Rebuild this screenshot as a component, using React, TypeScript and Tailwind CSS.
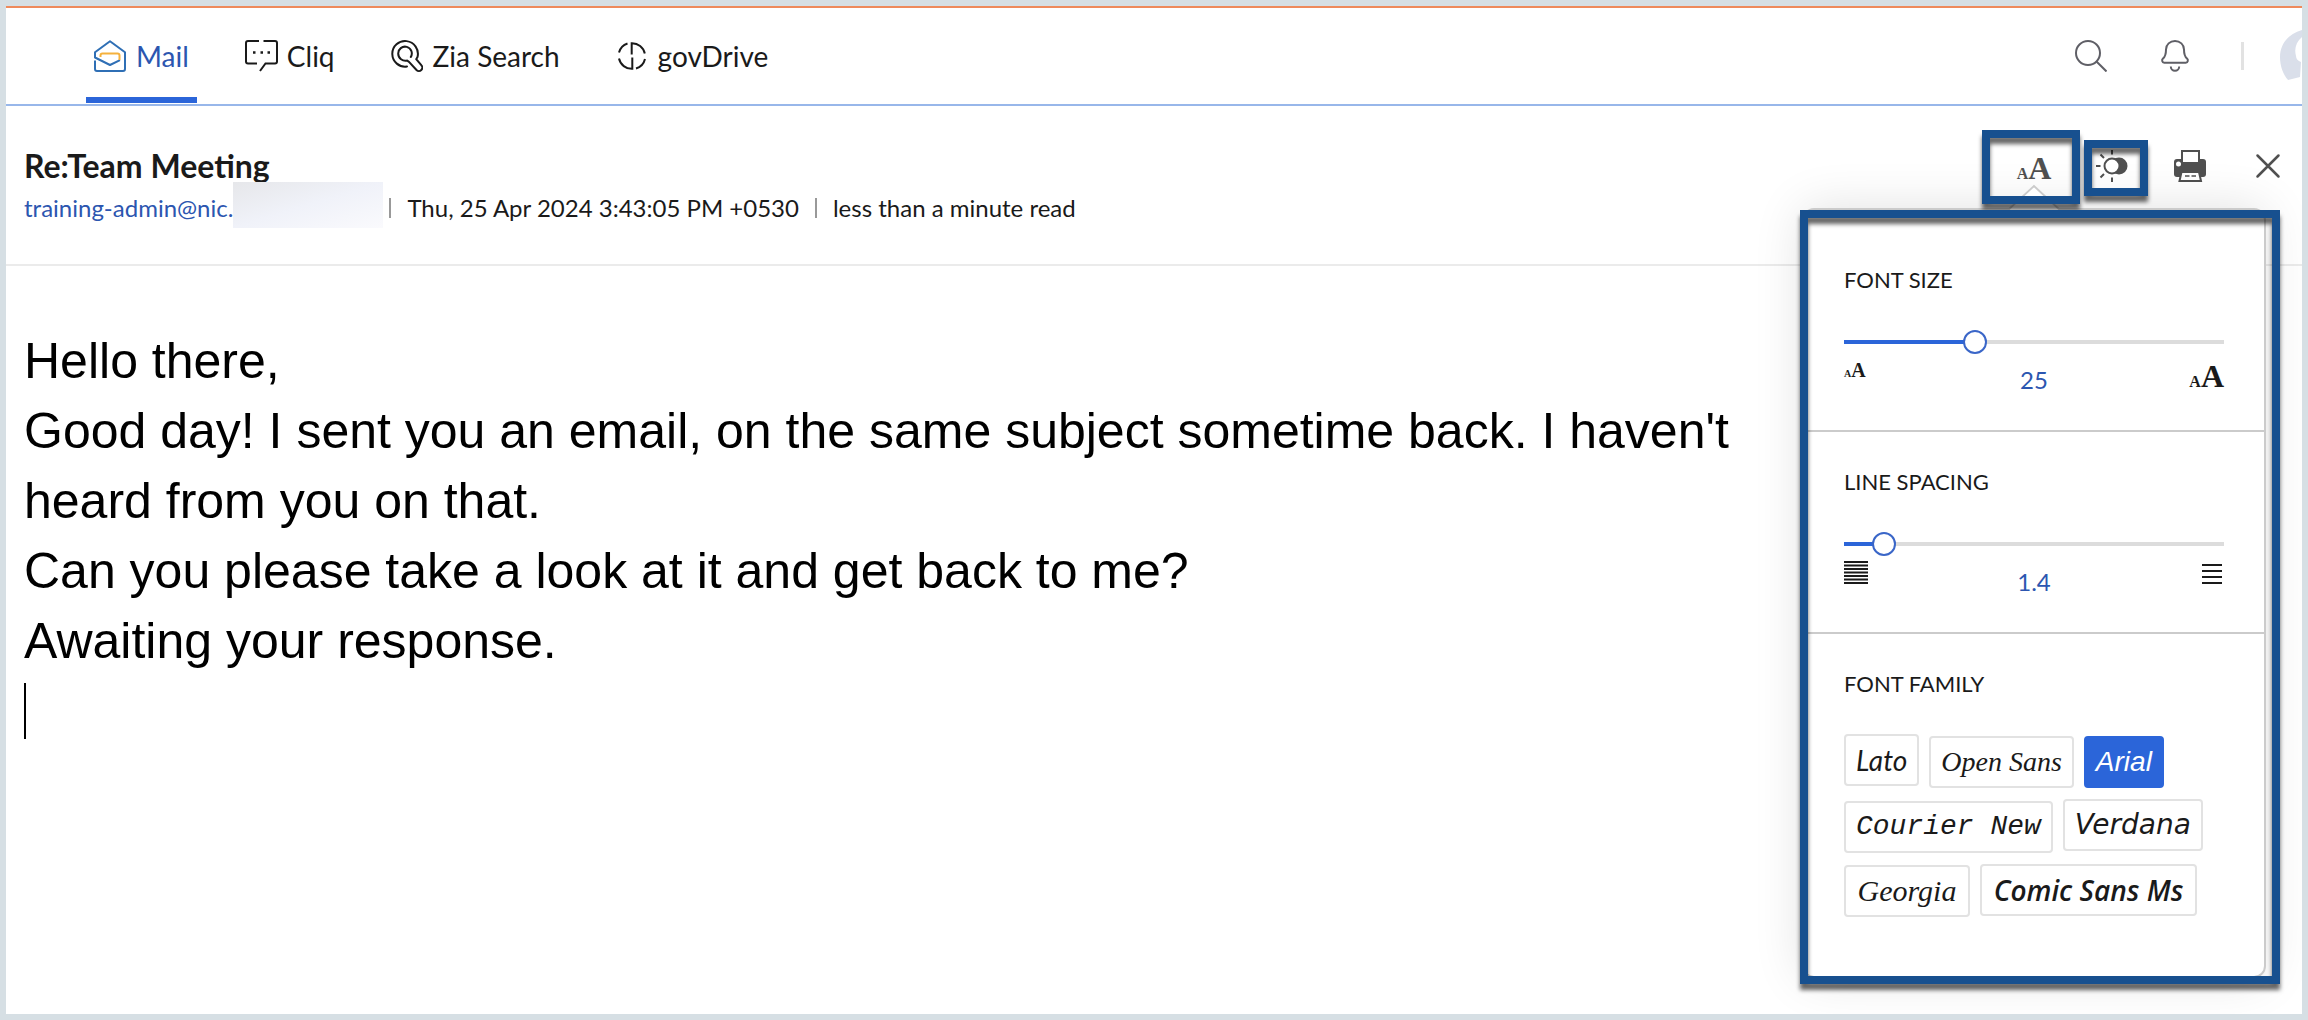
import { useState, ReactNode } from "react";

const fonts = [
  { name: "Lato", cls: "font-['Lato',sans-serif]" },
  { name: "Open Sans", cls: "font-['Liberation_Serif',serif]" },
  { name: "Arial", cls: "font-['Liberation_Sans',Arial,sans-serif]" },
  { name: "Courier New", cls: "font-['Liberation_Mono','Courier_New',monospace]" },
  { name: "Verdana", cls: "font-['DejaVu_Sans',Verdana,sans-serif]" },
  { name: "Georgia", cls: "w-[126px] text-[30px] font-['Liberation_Serif',Georgia,serif]" },
  { name: "Comic Sans Ms", cls: "w-[217px] font-semibold font-['Comic_Sans_MS','Open_Sans',cursive]" },
];

const MailIcon = () => (
  <svg className="size-8" viewBox="0 0 32 32" fill="none" strokeWidth="2" strokeLinejoin="round">
    <path d="M1 20.5V29a2 2 0 0 0 2 2h26a2 2 0 0 0 2-2V12.3L16 1.2 1 12.3v5.2L16 25l10-4.8" stroke="#2f6fb5" />
    <path d="M6.5 17v-1.5a2 2 0 0 1 2-2h15a2 2 0 0 1 2 2V20" stroke="#f5b13d" />
  </svg>
);

const CliqIcon = () => (
  <svg className="size-8 overflow-visible" viewBox="0 0 32 32" fill="none" stroke="currentColor" strokeWidth="2">
    <path d="M14 1H3a2 2 0 0 0-2 2v18.5a2 2 0 0 0 2 2h9M18.5 1H30a2 2 0 0 1 2 2v18.5a2 2 0 0 1-2 2h-9.5L15 31" />
    <path d="M8 12.5h2.5M15.5 12.5H18M22.5 12.5H25" strokeWidth="2.5" />
  </svg>
);

const ZiaIcon = () => (
  <svg
    className="size-8"
    viewBox="0 0 32 32"
    fill="none"
    stroke="currentColor"
    strokeWidth="2"
    strokeLinecap="round"
    strokeLinejoin="round"
  >
    <path d="M16 26.5A12.8 12.8 0 1 1 26.5 17l-1.3 2.2 5.1 6a3.3 3.3 0 0 1-4.8 4.8L18 21.8l-1.8-1.2c-4.5 1-9-2.2-9-7a6.8 6.8 0 1 1 12.6 3.4" />
  </svg>
);

const DriveIcon = () => (
  <svg className="size-8" viewBox="0 0 32 32" fill="none" stroke="currentColor" strokeWidth="2">
    <path d="M11.5 3.5A13.2 13.2 0 0 0 3 12.5M29 19a13.2 13.2 0 0 1-9 9.5" />
    <path d="M15.7 14.5V3.2A13 13 0 0 1 28.8 13.5M16.3 17.500v11.3A13 13 0 0 1 3 18.5" />
  </svg>
);

const SearchIcon = () => (
  <svg className="size-8" viewBox="0 0 32 32" fill="none" stroke="currentColor" strokeWidth="2">
    <circle cx="13" cy="13" r="12" />
    <path d="M21.5 21.5l10 10" />
  </svg>
);

const BellIcon = () => (
  <svg className="size-8" viewBox="0 0 32 32" fill="none" stroke="currentColor" strokeWidth="2" strokeLinejoin="round">
    <path d="M16 1c-5 0-9 3.5-9 8.5 0 5-.5 7-3 9-1.5 1.3-1 4.2 1.2 4.2h21.6c2.2 0 2.7-2.9 1.2-4.2-2.5-2-3-4-3-9C25 4.5 21 1 16 1Z" />
    <path d="M11.8 26.5a4.2 4.2 0 0 0 8.4 0" />
  </svg>
);

const ThemeIcon = () => (
  <svg className="size-8" viewBox="0 0 32 32" fill="none" stroke="currentColor" strokeWidth="2">
    <circle cx="23" cy="16" r="8.5" fill="currentColor" stroke="none" />
    <circle cx="16" cy="16" r="7.5" fill="#fff" />
    <path d="M16 0v4.5M16 27.5V32M0 16h4.5M4.5 4.5 8 8M4.5 27.5 8 24" />
  </svg>
);

const PrintIcon = () => (
  <svg className="size-8" viewBox="0 0 32 32">
    <path d="M3 9h26a3 3 0 0 1 3 3v12a3 3 0 0 1-3 3H3a3 3 0 0 1-3-3V12a3 3 0 0 1 3-3Z" fill="currentColor" />
    <path d="M8 1h17v12H8Z" fill="#fff" stroke="currentColor" strokeWidth="2" />
    <path d="M7.5 22H25l2 9H5.5Z" fill="#fff" stroke="currentColor" strokeWidth="2" />
    <path d="M11 26h4.5M17.5 26H22" stroke="currentColor" strokeWidth="1.5" />
    <circle cx="4.5" cy="14" r="2.5" fill="#fff" />
  </svg>
);

const CloseIcon = () => (
  <svg className="size-8" viewBox="0 0 32 32" stroke="currentColor" strokeWidth="2.5" strokeLinecap="round">
    <path d="M5.5 5.5l21 21M26.5 5.5l-21 21" />
  </svg>
);

const DenseLines = () => (
  <svg className="h-6 w-6" viewBox="0 0 24 24" stroke="currentColor" strokeWidth="2">
    <path d="M0 2h24M0 5.5h24M0 9h24M0 12.5h24M0 16h24M0 19.5h24M0 23h24" />
  </svg>
);

const LooseLines = () => (
  <svg className="mt-1 mr-0.5 h-5 w-5" viewBox="0 0 20 20" stroke="currentColor" strokeWidth="2">
    <path d="M0 1h20M0 7h20M0 13h20M0 19h20" />
  </svg>
);

const Highlight = ({ className }: { className: string }) => (
  <span
    aria-hidden="true"
    className={`pointer-events-none absolute border-8 border-[#17508f] drop-shadow-[0_6px_2px_rgba(0,0,0,0.6)] ${className}`}
  />
);

function NavLink({ icon, label, active }: { icon: ReactNode; label: string; active?: boolean }) {
  return (
    <a
      href="#"
      className={
        active
          ? "flex items-center gap-2.5 border-b-6 border-[#2b65d9] px-2 pt-1.5 text-[#2c56b0]"
          : "flex items-center gap-2.5 border-b-6 border-transparent px-2 pt-1.5"
      }
    >
      {icon}
      {label}
    </a>
  );
}

type SliderProps = {
  id: string;
  label: string;
  min: number;
  max: number;
  step: number;
  value: number;
  onChange: (v: number) => void;
  low: ReactNode;
  high: ReactNode;
};

function SliderSection({ id, label, min, max, step, value, onChange, low, high }: SliderProps) {
  const pct = ((value - min) / (max - min)) * 100;
  return (
    <section className="border-b-2 border-[#cbcbcb] px-10 pt-9 pb-[34px]">
      <label htmlFor={id} className="block text-[22px] leading-7">
        {label}
      </label>
      <input
        id={id}
        type="range"
        min={min}
        max={max}
        step={step}
        value={value}
        onChange={(e) => onChange(Number(e.target.value))}
        style={{ backgroundImage: `linear-gradient(to right, #2b65d9 ${pct}%, #dcdcdc ${pct}%)` }}
        className="mt-9 block h-6 w-full appearance-none bg-[length:100%_4px] bg-center bg-no-repeat outline-none [&::-webkit-slider-thumb]:size-6 [&::-webkit-slider-thumb]:appearance-none [&::-webkit-slider-thumb]:rounded-full [&::-webkit-slider-thumb]:border-2 [&::-webkit-slider-thumb]:border-[#3a66c8] [&::-webkit-slider-thumb]:bg-white"
      />
      <div className="mt-1 grid h-[38px] grid-cols-3 items-start">
        {low}
        <output htmlFor={id} className="pt-1.5 text-center text-2xl leading-8 text-[#2c56b0]">
          {value}
        </output>
        <span className="justify-self-end">{high}</span>
      </div>
    </section>
  );
}

export default function App() {
  const [fontSize, setFontSize] = useState(25);
  const [spacing, setSpacing] = useState(1.4);
  const [family, setFamily] = useState("Arial");

  return (
    <div className="flex min-h-screen bg-[#d6dfe4] p-1.5 font-['Lato',sans-serif] text-[#1a1a1a]">
      <div className="relative flex flex-1 flex-col overflow-hidden border-t-2 border-[#ee8a5c] bg-white">
        <header className="flex h-[98px] items-stretch justify-between border-b-2 border-[#98b7ea] pb-px pl-20">
          <nav className="flex gap-10 text-[28px]">
            <NavLink icon={<MailIcon />} label="Mail" active />
            <NavLink icon={<CliqIcon />} label="Cliq" />
            <NavLink icon={<ZiaIcon />} label="Zia Search" />
            <NavLink icon={<DriveIcon />} label="govDrive" />
          </nav>
          <div className="flex items-center text-[#5f5f66]">
            <button aria-label="Search" className="mr-[52px]">
              <SearchIcon />
            </button>
            <button aria-label="Notifications" className="mr-[50px]">
              <BellIcon />
            </button>
            <span className="mr-9 h-7 w-[3px] bg-[#e2e2e2]" />
            <button aria-label="Account">
              <svg className="h-[52px] w-[22px]" viewBox="0 0 22 52">
                <path d="M22 0C8 4 0 14 0 27c0 9 3 17 8 23l12-3 1-15c-3-1-5-3-5-6-2-7 0-14 6-19Z" fill="#dadfea" />
              </svg>
            </button>
          </div>
        </header>

        <div className="flex items-start justify-between border-b-2 border-[#ebebeb] pr-[18px] pb-10 pl-[18px]">
          <div className="pt-10">
            <h1 className="text-[32px] leading-10 font-bold">Re:Team Meeting</h1>
            <div className="mt-1.5 flex items-center text-2xl leading-8">
              <a href="#" className="text-[#2c56b0]">
                training-admin@nic.
              </a>
              {/* masked part of the address */}
              <span className="-mt-3.5 -mb-2 h-[46px] w-[150px] bg-linear-to-br from-[#e6e7ea] via-[#f0f2f9] to-[#fafafd]" />
              <span className="ml-1.5 h-5 w-0.5 bg-[#999]" />
              <time className="mx-4">Thu, 25 Apr 2024 3:43:05 PM +0530</time>
              <span className="h-5 w-0.5 bg-[#999]" />
              <span className="ml-4">less than a minute read</span>
            </div>
          </div>
          <div className="flex gap-[46px] pt-11 text-[#505050]">
            <button
              aria-label="Text settings"
              className="flex size-8 items-baseline justify-center pt-0.5 font-['Liberation_Serif',serif] font-bold"
            >
              <span className="text-base leading-8">A</span>
              <span className="text-[32px] leading-8">A</span>
            </button>
            <button aria-label="Dark mode">
              <ThemeIcon />
            </button>
            <button aria-label="Print">
              <PrintIcon />
            </button>
            <button aria-label="Close">
              <CloseIcon />
            </button>
          </div>
        </div>

        <main className="pt-[60px] pr-[540px] pl-[18px] font-['Liberation_Sans',Arial,sans-serif] text-[50px] leading-[70px] text-black">
          <p>Hello there,</p>
          <p>Good day! I sent you an email, on the same subject sometime back. I haven't heard from you on that.</p>
          <p>Can you please take a look at it and get back to me?</p>
          <p>Awaiting your response.</p>
          <div className="mt-[7px] h-14 w-0.5 bg-black" />
        </main>

        {/* reading options dropdown */}
        <div className="absolute top-[200px] right-9 h-[770px] w-[464px] rounded-xl border-2 border-[#cbcbcb] bg-white pt-5 shadow-[0_0_50px_rgba(0,0,0,0.12)]">
          <svg
            className="absolute -top-[26px] left-[204px] h-[27px] w-[52px]"
            viewBox="0 0 52 27"
            fill="#fff"
            stroke="#cbcbcb"
            strokeWidth="2"
          >
            <path d="M0 26 26 2l26 24" />
          </svg>
          <SliderSection
            id="font-size"
            label="FONT SIZE"
            min={10}
            max={55}
            step={1}
            value={fontSize}
            onChange={setFontSize}
            low={
              <span className="flex items-baseline font-['Liberation_Serif',serif] font-bold">
                <span className="text-[10px] leading-6">A</span>
                <span className="text-xl leading-6">A</span>
              </span>
            }
            high={
              <span className="flex items-baseline pt-0.5 font-['Liberation_Serif',serif] font-bold">
                <span className="text-base leading-8">A</span>
                <span className="text-[32px] leading-8">A</span>
              </span>
            }
          />
          <SliderSection
            id="line-spacing"
            label="LINE SPACING"
            min={1}
            max={6}
            step={0.1}
            value={spacing}
            onChange={setSpacing}
            low={<DenseLines />}
            high={<LooseLines />}
          />
          <section className="px-10 pt-9">
            <h2 className="text-[22px] leading-7">FONT FAMILY</h2>
            <div className="mt-9 flex flex-wrap items-baseline gap-x-2.5 gap-y-[11px] text-[28px] leading-12 italic">
              {fonts.map((f) => (
                <button
                  key={f.name}
                  onClick={() => setFamily(f.name)}
                  className={`rounded border-2 px-2.5 whitespace-nowrap ${f.cls} ${
                    family === f.name ? "border-[#2b65d9] bg-[#2b65d9] text-white" : "border-[#e2e2e2]"
                  }`}
                >
                  {f.name}
                </button>
              ))}
            </div>
          </section>
        </div>

        <Highlight className="top-[122px] right-[222px] h-[74px] w-[98px]" />
        <Highlight className="top-[132px] right-[154px] h-14 w-16" />
        <Highlight className="top-[202px] right-[22px] h-[774px] w-[480px]" />
      </div>
    </div>
  );
}
